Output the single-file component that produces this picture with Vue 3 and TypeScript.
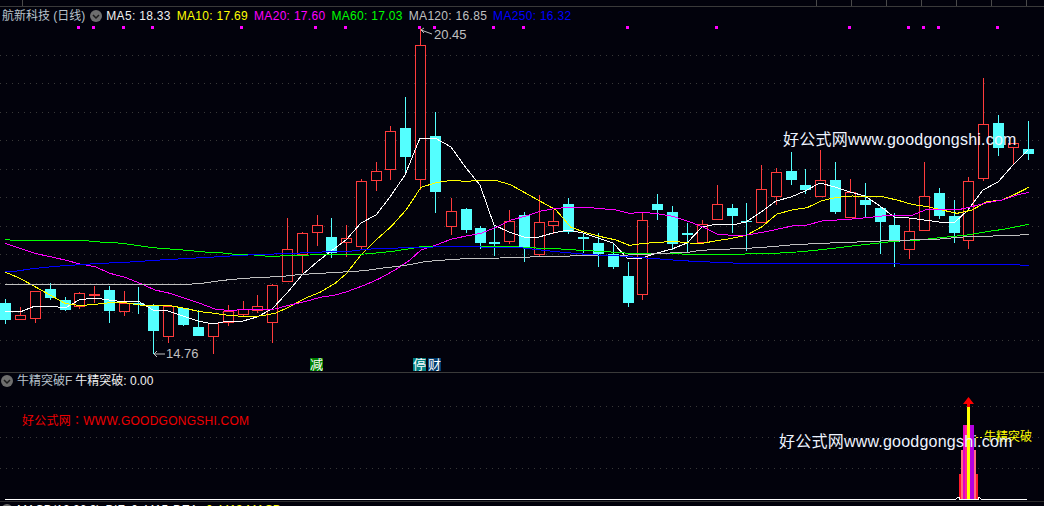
<script setup lang="ts">
type Candle = { x: number; top: number; bottom: number; high: number; low: number; up: boolean }

const raw: Array<[number, number, number, number, number, number]> = [
  [5, 303, 320, 299, 324, 0], [20, 315, 320, 307, 320, 1], [35, 291, 319, 291, 323, 1], [50, 289, 298, 283, 300, 0],
  [65, 300, 310, 297, 311, 0], [79, 293, 307, 292, 309, 1], [94, 294, 296, 286, 303, 1], [109, 290, 311, 286, 323, 0],
  [124, 303, 312, 291, 316, 1], [138, 303, 305, 287, 314, 0], [153, 306, 331, 304, 354, 0], [168, 306, 337, 305, 343, 1],
  [183, 308, 325, 308, 326, 0], [198, 327, 336, 310, 336, 0], [213, 323, 337, 323, 354, 1], [228, 311, 323, 305, 326, 1],
  [243, 309, 315, 301, 317, 1], [257, 306, 311, 295, 313, 1], [272, 285, 323, 284, 343, 1], [287, 249, 282, 218, 282, 1],
  [302, 233, 255, 232, 273, 1], [317, 225, 233, 215, 246, 1], [331, 237, 253, 218, 258, 0], [346, 238, 243, 225, 257, 1],
  [361, 181, 247, 179, 249, 1], [376, 171, 181, 162, 191, 1], [390, 131, 170, 126, 180, 1], [405, 128, 157, 97, 173, 0],
  [420, 45, 180, 28, 190, 1], [435, 136, 192, 112, 213, 0], [451, 211, 227, 198, 235, 1], [466, 209, 230, 208, 233, 0],
  [480, 228, 243, 226, 249, 0], [494, 242, 244, 226, 256, 0], [509, 221, 242, 210, 244, 1], [524, 215, 247, 212, 262, 0],
  [539, 222, 255, 195, 257, 1], [553, 221, 226, 210, 234, 1], [568, 204, 232, 198, 234, 0], [583, 237, 239, 233, 253, 0],
  [598, 243, 254, 233, 267, 0], [613, 254, 267, 243, 269, 0], [628, 276, 303, 262, 307, 0], [642, 220, 295, 213, 300, 1],
  [657, 204, 210, 194, 220, 0], [672, 212, 244, 206, 250, 0], [687, 233, 235, 223, 253, 0], [702, 224, 243, 220, 243, 1],
  [717, 204, 220, 185, 220, 1], [732, 208, 216, 204, 233, 0], [746, 221, 222, 203, 251, 0], [761, 189, 223, 165, 223, 1],
  [776, 172, 197, 168, 205, 1], [791, 171, 180, 152, 185, 0], [805, 185, 190, 169, 194, 0], [820, 180, 197, 150, 197, 1],
  [835, 180, 212, 162, 214, 0], [850, 192, 218, 179, 218, 1], [865, 200, 205, 183, 218, 0], [880, 208, 222, 206, 254, 0],
  [894, 225, 242, 213, 267, 0], [909, 231, 250, 218, 259, 1], [924, 196, 231, 162, 231, 1], [939, 193, 216, 188, 219, 0],
  [954, 216, 233, 200, 243, 0], [968, 181, 241, 177, 249, 1], [983, 124, 179, 78, 181, 1], [998, 123, 148, 115, 156, 0],
  [1013, 143, 148, 143, 165, 1], [1028, 149, 154, 121, 160, 0],
]
const candles: Candle[] = raw.map(([x, top, bottom, high, low, up]) => ({ x, top, bottom, high, low, up: up === 1 }))

const seg = (ox: number, oy: number, d: number[]): string => {
  const out: string[] = []
  for (let i = 0; i < d.length; i += 2) out.push(`${ox + d[i] / 3},${oy + d[i + 1] / 3}`)
  return out.join(' ')
}

const maLines = [
  {
    color: '#ffffff',
    points: '5,311 20,312 35,306 50,306 65,308 79,300 94,298 109,300 124,302 138,301 153,310 168,311 183,316 198,321 213,324 228,321 243,321 257,317 272,309 287,293 302,275 317,262 331,251 346,240 361,223 376,215 390,197 405,175 420,138 435,138 451,147 466,168 480,185 494,225 509,232 524,237 539,237 553,233 568,230 583,233 598,238 613,243 628,259 642,258 657,253 672,249 687,243 702,227 717,224 732,225 746,222 761,212 776,201 791,197 805,191 820,183 835,187 850,192 865,196 880,206 894,217 909,218 924,220 939,222 954,223 968,210 983,190 998,182 1013,165 1028,150',
  },
  {
    color: '#ffff00',
    points:
      seg(0, 220, [15, 156, 60, 175, 105, 200, 150, 225, 195, 250, 240, 257, 285, 253, 330, 248, 375, 248, 420, 255, 465, 255, 510, 257, 555, 265, 600, 275, 645, 280, 690, 287, 735, 289, 780, 288, 825, 280, 870, 260, 915, 235, 960, 217, 1005, 190, 1038, 162]) + ' ' +
      seg(350, 110, [33, 435, 78, 390, 123, 350, 168, 300, 213, 232, 258, 218, 303, 211, 348, 214, 393, 211, 438, 211, 483, 225, 528, 250, 573, 275, 618, 300, 663, 352, 708, 368, 753, 380, 798, 390, 838, 406, 883, 400, 928, 397, 973, 394, 1018, 399]) + ' ' +
      seg(700, 70, [6, 520, 51, 512, 96, 505, 141, 495, 186, 470, 231, 432, 276, 420, 321, 413, 366, 392, 411, 382, 456, 378, 501, 379, 546, 380, 591, 390, 636, 403, 681, 410, 726, 420, 771, 430, 816, 420, 861, 395, 906, 390, 951, 370, 986, 352]),
  },
  {
    color: '#ff00ff',
    points:
      seg(0, 220, [15, 70, 60, 85, 105, 100, 150, 110, 195, 120, 240, 132, 285, 140, 330, 160, 375, 172, 420, 190, 465, 210, 510, 220, 555, 235, 600, 250, 645, 267, 690, 272, 735, 268, 780, 268, 825, 267, 870, 255, 915, 245, 960, 232, 1005, 225, 1038, 216]) + ' ' +
      seg(350, 110, [45, 525, 90, 505, 135, 480, 180, 450, 213, 420, 258, 405, 303, 388, 348, 378, 393, 370, 438, 352, 483, 330, 528, 318, 573, 303, 618, 295, 663, 292, 708, 292, 753, 296, 798, 300, 838, 310, 883, 307, 928, 312, 973, 320, 1018, 335]) + ' ' +
      seg(700, 70, [6, 470, 51, 492, 96, 496, 141, 495, 186, 487, 231, 478, 276, 468, 321, 465, 366, 453, 411, 450, 456, 447, 501, 443, 546, 438, 591, 437, 636, 436, 681, 418, 726, 418, 771, 420, 816, 410, 861, 398, 906, 390, 951, 375, 986, 367]),
  },
  {
    color: '#00ff00',
    points:
      seg(0, 220, [15, 58, 45, 62, 255, 62, 300, 66, 345, 68, 390, 73, 435, 80, 480, 85, 525, 88, 570, 92, 615, 96, 660, 98, 705, 103, 750, 104, 795, 108, 840, 108, 885, 106, 930, 105, 975, 104, 1020, 104]) + ' ' +
      seg(350, 110, [45, 432, 90, 428, 135, 423, 180, 416, 213, 410, 258, 409, 303, 409, 348, 409, 393, 409, 438, 409, 483, 410, 528, 412, 573, 415, 618, 416, 663, 419, 708, 422, 753, 424, 798, 427, 838, 430, 883, 431, 928, 431, 973, 431, 1018, 433]) + ' ' +
      seg(700, 70, [0, 552, 135, 552, 225, 550, 290, 546, 345, 541, 400, 535, 455, 528, 510, 522, 565, 516, 610, 512, 660, 510, 700, 505, 750, 500, 800, 495, 860, 485, 910, 478, 950, 470, 986, 463]),
  },
  {
    color: '#c0c0c0',
    points:
      seg(0, 220, [15, 193, 560, 193, 605, 190, 660, 182, 720, 176, 780, 172, 840, 170, 885, 165, 940, 161, 1000, 158, 1045, 155]) + ' ' +
      seg(350, 110, [45, 482, 90, 475, 135, 470, 180, 464, 225, 455, 270, 451, 315, 448, 360, 445, 450, 444, 540, 441, 630, 439, 720, 436, 810, 436, 880, 433, 930, 431, 975, 428, 1020, 426]) + ' ' +
      seg(700, 70, [0, 541, 90, 537, 180, 533, 270, 525, 360, 520, 450, 517, 540, 513, 630, 510, 720, 507, 800, 500, 880, 498, 986, 494]),
  },
  {
    color: '#0000ff',
    points:
      seg(0, 220, [15, 156, 45, 154, 90, 147, 135, 142, 180, 138, 225, 135, 270, 132, 345, 128, 390, 126, 480, 120, 570, 115, 660, 110, 720, 106, 795, 103, 900, 99, 990, 95, 1040, 95]) + ' ' +
      seg(350, 110, [45, 418, 100, 415, 190, 413, 280, 410, 500, 412, 590, 422, 640, 427, 720, 434, 810, 438, 900, 445, 945, 448, 990, 452, 1040, 454]) + ' ' +
      seg(700, 70, [0, 574, 30, 576, 120, 580, 300, 580, 600, 582, 780, 583, 960, 585, 986, 587]),
  },
]

const mainGrid = [55, 83, 112, 140, 169, 197, 226, 254, 283, 312, 340]
const subGrid = [406, 437, 468]
const markers = [78, 93, 123, 152, 241, 315, 345, 419, 434, 493, 523, 627, 716, 849, 908, 923, 938, 997]

const legend = [
  { label: 'MA5: 18.33', cls: 'ma5' },
  { label: 'MA10: 17.69', cls: 'ma10' },
  { label: 'MA20: 17.60', cls: 'ma20' },
  { label: 'MA60: 17.03', cls: 'ma60' },
  { label: 'MA120: 16.85', cls: 'ma120' },
  { label: 'MA250: 16.32', cls: 'ma250' },
]
const quoteCells = ['18.45', '17.53 +', '19.02', '18.40', '', '8.71', '2.3']
const bars = [
  { x: 959, y: 474, w: 19, h: 26, fill: '#ff1a2a' },
  { x: 961, y: 450, w: 15, h: 50, fill: '#ff6a80' },
  { x: 963, y: 425, w: 11, h: 75, fill: '#e000c8' },
  { x: 965, y: 425, w: 2, h: 75, fill: '#ff2090' },
  { x: 970, y: 425, w: 4, h: 75, fill: '#b400e0' },
  { x: 967, y: 406, w: 3, h: 94, fill: '#ffff00' },
]
</script>

<template>
  <div class="page">
    <header class="top-strip">
      <div class="quote-left">
        <span class="tick-cell"></span>
        <div class="quote-text">
          <span>17.81</span><span>18.97</span><span>17.56</span><span>18.33</span><span>4.53</span><span>1.87</span>
          <span>16.10</span><span>21.44</span><span>12.30</span><span>9.85</span><span>3.62</span>
        </div>
      </div>
      <div v-for="(q, i) in quoteCells" :key="i" class="quote-cell">
        <span class="quote-clip">{{ q }}</span>
      </div>
    </header>

    <section class="pane main-pane">
      <svg class="chart" width="1044" height="365" viewBox="0 7 1044 365">
        <line v-for="y in mainGrid" :key="y" class="grid" x1="0" x2="1044" :y1="y + 0.5" :y2="y + 0.5" />
        <rect v-for="m in markers" :key="m" class="marker" :x="m - 1" y="26" width="3" height="3" />
        <g v-for="c in candles" :key="c.x" class="candle">
          <line :class="c.up ? 'wick-up' : 'wick-down'" :x1="c.x + 0.5" :x2="c.x + 0.5" :y1="c.high" :y2="c.low" />
          <rect v-if="c.up" class="body-up" :x="c.x - 4.5" :y="c.top + 0.5" width="10" :height="c.bottom - c.top - 1" />
          <rect v-else class="body-down" :x="c.x - 5" :y="c.top" width="11" :height="c.bottom - c.top" />
        </g>
        <polyline v-for="l in maLines" :key="l.color" class="ma-line" :points="l.points" :stroke="l.color" />
        <polyline class="pointer" points="432,34 421,30 424,28" />
        <polyline class="pointer" points="421,30 424,33" />
        <text class="price" x="434" y="39">20.45</text>
        <polyline class="pointer" points="165,354 154,354 157,351" />
        <polyline class="pointer" points="154,354 157,357" />
        <text class="price" x="166" y="358">14.76</text>
        <g class="tag">
          <rect class="tag-green" x="310" y="358" width="13" height="13" />
          <text x="310" y="369">减</text>
          <rect class="tag-teal" x="413" y="358" width="13" height="13" />
          <text x="413" y="369">停</text>
          <rect class="tag-navy" x="428" y="358" width="13" height="13" />
          <text x="428" y="369">财</text>
        </g>
        <text class="watermark" x="783" y="145">好公式网www.goodgongshi.com</text>
      </svg>
      <div class="legend">
        <span class="stock-name">航新科技 (日线)</span>
        <svg class="fold" width="12" height="12" viewBox="0 0 12 12">
          <circle cx="6" cy="6" r="6" />
          <polyline points="3,5 6,8 9,5" />
        </svg>
        <span v-for="m in legend" :key="m.cls" :class="m.cls">{{ m.label }}</span>
      </div>
    </section>

    <section class="pane sub-pane">
      <svg class="chart" width="1044" height="128" viewBox="0 373 1044 128">
        <line v-for="y in subGrid" :key="y" class="grid" x1="0" x2="1044" :y1="y + 0.5" :y2="y + 0.5" />
        <rect v-for="b in bars" :key="b.x + b.fill" :x="b.x" :y="b.y" :width="b.w" :height="b.h" :fill="b.fill" />
        <polyline class="baseline" points="5,499.5 955,499.5 958,497.5 959,497.5 959,499.5 978,499.5 978,497.5 979,497.5 982,499.5 1027,499.5" />
        <rect class="arrow" x="967" y="402" width="3" height="5" />
        <polygon class="arrow" points="968.5,397 963,404 974,404" />
        <text class="red-note" x="22" y="425">好公式网<tspan class="cjk-colon">：</tspan>WWW.GOODGONGSHI.COM</text>
        <line class="bull-dash" x1="976" x2="984" y1="437.5" y2="437.5" />
        <text class="bull-label" x="984" y="441">牛精突破</text>
        <text class="watermark" x="779" y="447">好公式网www.goodgongshi.com</text>
      </svg>
      <div class="legend sub-legend">
        <svg class="fold" width="12" height="12" viewBox="0 0 12 12">
          <circle cx="6" cy="6" r="6" />
          <polyline points="3,5 6,8 9,5" />
        </svg>
        <span class="stock-name">牛精突破F</span>
        <span class="ma5 sub-value">牛精突破: 0.00</span>
      </div>
    </section>

    <footer class="bottom-strip">
      <span class="macd-grey"></span>
      <span class="macd-white">MACD(12,26,9)</span>
      <span class="macd-white">DIF: 0.4415</span>
      <span class="macd-white">DEA:</span>
      <span class="macd-yellow">0.4413 MACD:</span>
    </footer>
  </div>
</template>

<style>
html,
body {
  margin: 0;
  background: #02020c;
}
</style>

<style scoped>
.page {
  width: 1044px;
  height: 506px;
  overflow: hidden;
  display: flex;
  flex-direction: column;
  background: #02020c;
  font-family: "Liberation Sans", "Noto Sans CJK SC", sans-serif;
  font-size: 12px;
}
.top-strip {
  height: 6px;
  flex: none;
  display: flex;
  overflow: hidden;
  color: #c8c8c8;
  line-height: 12px;
}
.quote-left {
  width: 816px;
  flex: none;
  display: flex;
  box-sizing: border-box;
  padding-left: 22px;
  overflow: hidden;
}
.quote-text {
  display: flex;
  gap: 26px;
  margin: -10px 0 0 8px;
  white-space: nowrap;
}
.tick-cell {
  width: 1px;
  height: 6px;
  flex: none;
  background: #4a4a4a;
}
.quote-cell {
  width: 35px;
  flex: none;
  border-left: 1px solid #4a4a4a;
  box-sizing: border-box;
  padding-left: 6px;
  white-space: nowrap;
  overflow: hidden;
}
.quote-clip {
  display: block;
  margin-top: -10px;
}
.pane {
  position: relative;
  flex: none;
  border-top: 1px solid #3a3a3a;
}
.main-pane {
  height: 365px;
}
.sub-pane {
  height: 128px;
  border-bottom: 1px solid #2c2c2c;
}
.chart {
  display: block;
}
.grid {
  stroke: #383838;
  stroke-width: 1;
  stroke-dasharray: 1 5;
  shape-rendering: crispEdges;
}
.marker {
  fill: #ff00ff;
}
.candle line,
.candle rect {
  shape-rendering: crispEdges;
}
.wick-up {
  stroke: #ff3c3c;
}
.wick-down {
  stroke: #54ffff;
}
.body-up {
  fill: #02020c;
  stroke: #ff3c3c;
}
.body-down {
  fill: #54ffff;
}
.ma-line {
  fill: none;
  stroke-width: 1;
  shape-rendering: crispEdges;
}
.pointer {
  fill: none;
  stroke: #c0c0c0;
  stroke-width: 1;
}
.price {
  fill: #c0c0c0;
  font-size: 13px;
}
.tag text {
  fill: #ffffff;
  font-size: 13px;
}
.tag-green {
  fill: #008000;
}
.tag-teal {
  fill: #008080;
}
.tag-navy {
  fill: #003c6e;
}
.watermark {
  fill: #eef4ff;
  font-size: 16px;
  letter-spacing: 0.22px;
}
.legend {
  position: absolute;
  left: 2px;
  top: 1px;
  height: 16px;
  display: flex;
  align-items: center;
  gap: 6px;
  line-height: 16px;
  letter-spacing: 0.3px;
  white-space: nowrap;
}
.stock-name {
  color: #b8c2cc;
  letter-spacing: 0;
}
.fold {
  flex: none;
  margin-left: -1px;
  margin-right: -2px;
}
.fold circle {
  fill: #6e6e6e;
}
.fold polyline {
  fill: none;
  stroke: #1c1c1c;
  stroke-width: 1.5;
}
.ma5 {
  color: #f0f0f0;
}
.ma10 {
  color: #ffff00;
}
.ma20 {
  color: #ff00ff;
}
.ma60 {
  color: #00ff00;
}
.ma120 {
  color: #c0c0c0;
}
.ma250 {
  color: #0000ff;
}
.sub-legend {
  left: 1px;
  top: 0;
  gap: 4px;
}
.sub-legend .fold {
  margin: 0;
}
.sub-value {
  margin-left: -1px;
  letter-spacing: 0;
}
.baseline {
  fill: none;
  stroke: #ffffff;
  stroke-width: 1;
  shape-rendering: crispEdges;
}
.arrow {
  fill: #ff0000;
}
.red-note {
  fill: #ee0000;
  font-size: 12px;
  letter-spacing: 0.25px;
}
.cjk-colon {
  font-family: "Noto Sans CJK TC", sans-serif;
}
.bull-label {
  fill: #ffff00;
  font-size: 12px;
}
.bull-dash {
  stroke: #ffff00;
  stroke-dasharray: 2 2;
}
.bottom-strip {
  flex: 1;
  display: flex;
  gap: 5px;
  padding: 3px 0 0 1px;
  overflow: hidden;
  line-height: 10px;
  color: #ffffff;
  font-size: 12px;
  white-space: nowrap;
}
.macd-grey {
  width: 12px;
  height: 12px;
  margin: -1px -1px 0 0;
  flex: none;
  border-radius: 50%;
  background: #6e6e6e;
}
.macd-yellow {
  color: #ffff00;
}
</style>
